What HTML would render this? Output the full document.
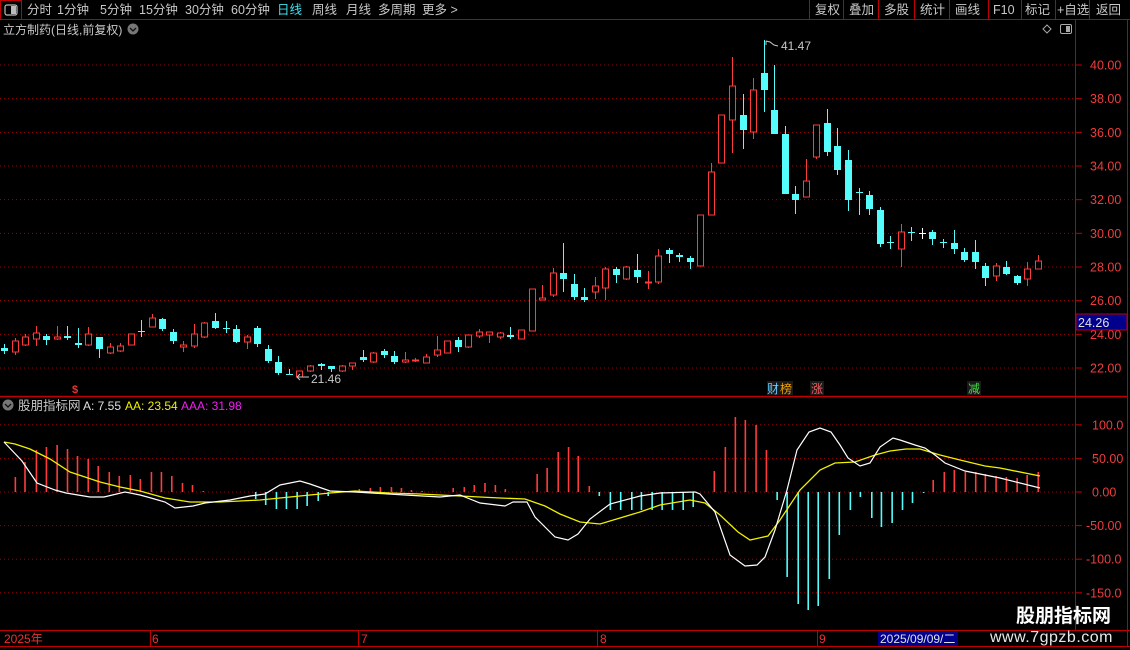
<!DOCTYPE html>
<html><head><meta charset="utf-8">
<style>
html,body{margin:0;padding:0;background:#000;}
body{width:1130px;height:650px;overflow:hidden;position:relative;font-family:"Liberation Sans","Noto Sans CJK SC",sans-serif;}
svg{position:absolute;left:0;top:0;}
</style></head><body>
<svg id="s" width="1130" height="650" xmlns="http://www.w3.org/2000/svg" font-family="Liberation Sans, Noto Sans CJK SC, sans-serif">
<rect width="1130" height="650" fill="#000"/>
<line x1="0" y1="19.5" x2="1130" y2="19.5" stroke="#c00000"/>
<rect x="0.5" y="0.5" width="21" height="19" fill="none" stroke="#c00000"/>
<rect x="5" y="5" width="12" height="10" rx="2" fill="none" stroke="#bbb" stroke-width="1.2"/>
<rect x="11" y="6" width="5" height="8" fill="#bbb"/>
<g font-size="12.5" fill="#c8c8c8">
<text x="27" y="14">分时</text><text x="57" y="14">1分钟</text><text x="100" y="14">5分钟</text><text x="139" y="14">15分钟</text><text x="185" y="14">30分钟</text><text x="231" y="14">60分钟</text>
<text x="277" y="14" fill="#40e0f0">日线</text><text x="312" y="14">周线</text><text x="346" y="14">月线</text><text x="378" y="14">多周期</text><text x="422" y="14">更多 &gt;</text>
</g>
<g stroke="#c00000"><line x1="809.5" y1="0" x2="809.5" y2="19"/><line x1="843.5" y1="0" x2="843.5" y2="19"/><line x1="878.5" y1="0" x2="878.5" y2="19"/><line x1="914.5" y1="0" x2="914.5" y2="19"/><line x1="949.5" y1="0" x2="949.5" y2="19"/><line x1="988.5" y1="0" x2="988.5" y2="19"/><line x1="1021.5" y1="0" x2="1021.5" y2="19"/><line x1="1055.5" y1="0" x2="1055.5" y2="19"/><line x1="1089.5" y1="0" x2="1089.5" y2="19"/></g>
<g font-size="12.5" fill="#c8c8c8"><text x="815" y="14">复权</text><text x="849" y="14">叠加</text><text x="884" y="14">多股</text><text x="920" y="14">统计</text><text x="955" y="14">画线</text><text x="993" y="14">F10</text><text x="1025" y="14">标记</text><text x="1057" y="14">+自选</text><text x="1096" y="14">返回</text></g>
<text x="3" y="34" font-size="12" fill="#c8c8c8">立方制药(日线,前复权)</text>
<circle cx="133" cy="29" r="5.5" fill="#777"/><path d="M130 28 L133 31 L136 28" stroke="#111" stroke-width="1.3" fill="none"/>
<path d="M1047 25 L1051 29 L1047 33 L1043 29Z" fill="none" stroke="#aaa"/>
<rect x="1060.5" y="24.5" width="11" height="9" rx="1.5" fill="none" stroke="#aaa"/><rect x="1066" y="26" width="4" height="6" fill="#aaa"/>
<line x1="1075.5" y1="19" x2="1075.5" y2="630" stroke="#c00000"/>
<line x1="0" y1="396.5" x2="1127" y2="396.5" stroke="#c00000" stroke-width="1.5"/>
<line x1="1127.5" y1="20" x2="1127.5" y2="646" stroke="#c00000"/>
<g id="grid"></g>
<g id="cand"></g>
<g id="ind"></g>
<text x="311" y="383" font-size="12" fill="#c8c8c8">21.46</text>
<path d="M297 377 L309 377 M297 377 L300 374 M297 377 L300 380" stroke="#c8c8c8" fill="none"/>
<text x="781" y="50" font-size="12" fill="#c8c8c8">41.47</text>
<path d="M766 41 L766 45 M766 41 L770 42 L774 45 L778 46" stroke="#c8c8c8" fill="none"/>
<rect x="1076" y="314" width="51" height="16" fill="#00008c" stroke="#c00000"/>
<text x="1078" y="327" font-size="12.5" fill="#e0e0e0">24.26</text>
<text x="72" y="393" font-size="11" fill="#f03030" font-weight="bold">$</text>
<rect x="767" y="381" width="26" height="14" fill="#1a1a1a"/><text x="767" y="393" font-size="12" fill="#6cf">财</text><text x="780" y="393" font-size="12" fill="#f0a000">榜</text>
<rect x="810" y="381" width="14" height="14" fill="#1a1a1a"/><text x="811" y="393" font-size="12" fill="#f06060">涨</text>
<rect x="967" y="381" width="14" height="14" fill="#1a1a1a"/><text x="968" y="393" font-size="12" fill="#40e040">减</text>
<circle cx="8" cy="405" r="5.5" fill="#777"/><path d="M5 404 L8 407 L11 404" stroke="#111" stroke-width="1.3" fill="none"/>
<text x="18" y="410" font-size="12.5" fill="#c8c8c8">股朋指标网</text>
<text x="83" y="410" font-size="12" fill="#e0e0e0">A: 7.55</text>
<text x="125" y="410" font-size="12" fill="#f0f000">AA: 23.54</text>
<text x="181" y="410" font-size="12" fill="#f020f0">AAA: 31.98</text>
<line x1="0" y1="630.5" x2="1130" y2="630.5" stroke="#c00000"/>
<line x1="0" y1="646.5" x2="1130" y2="646.5" stroke="#c00000"/>
<g stroke="#c00000"><line x1="150.5" y1="630" x2="150.5" y2="646"/><line x1="358.5" y1="630" x2="358.5" y2="646"/><line x1="597.5" y1="630" x2="597.5" y2="646"/><line x1="817.5" y1="630" x2="817.5" y2="646"/></g>
<g font-size="12" fill="#f03030"><text x="4" y="643">2025年</text><text x="152" y="643">6</text><text x="361" y="643">7</text><text x="600" y="643">8</text><text x="819" y="643">9</text></g>
<rect x="878" y="631" width="80" height="15" fill="#00008c"/>
<text x="880" y="643" font-size="12" fill="#e0e0e0">2025/09/09/二</text>
<text x="1016" y="622" font-size="19" font-weight="bold" fill="#fff">股朋指标网</text>
<text x="990" y="642" font-size="16" fill="#e8e8e8" letter-spacing="0.5">www.7gpzb.com</text>
</svg>
<script>
var NS="http://www.w3.org/2000/svg";
function el(p,t,a){var e=document.createElementNS(NS,t);for(var k in a)e.setAttribute(k,a[k]);p.appendChild(e);return e;}
var g=document.getElementById('grid');
for(var i=0;i<10;i++){var p=40-2*i,y=65+(40-p)*16.833;
 el(g,'line',{x1:0,y1:y,x2:1073,y2:y,stroke:'#a00000','stroke-dasharray':'1,3'});
 el(g,'line',{x1:1076,y1:y,x2:1082,y2:y,stroke:'#c00000'});
 var t=el(g,'text',{x:1090,y:y+4.5,'font-size':12.5,fill:'#f03c3c'});t.textContent=p.toFixed(2);}
var il=[[100,'100.0'],[50,'50.00'],[0,'0.00'],[-50,'-50.00'],[-100,'-100.0'],[-150,'-150.0']];
il.forEach(function(v){var y=492-v[0]*0.672;
 el(g,'line',{x1:0,y1:y,x2:1073,y2:y,stroke:'#a00000','stroke-dasharray':'1,3'});
 el(g,'line',{x1:1076,y1:y,x2:1082,y2:y,stroke:'#c00000'});
 var t=el(g,'text',{x:v[1].length>5?1086:1092,y:y+4.5,'font-size':12.5,fill:'#f03c3c'});t.textContent=v[1];});
var C=[
['c',348,351,344,354],['r',341,352,338,355],['r',337,345,334,346],['r',333,339,326,346],['c',336,340,334,345],['r',337,339,326,340],['c',336,338,326,340],['c',343,345,328,348],['r',334,345,327,346],['c',337,349,337,358],
['r',347,353,343,354],['r',346,351,343,352],['r',334,345,334,345],['c',331,332,320,337],['r',318,327,314,327],['c',319,329,318,331],['c',332,341,329,344],['r',345,347,341,352],['r',334,346,324,348],['r',323,337,322,338],
['c',321,328,313,329],['c',328,328,321,333],['c',329,342,325,343],['r',337,342,335,349],['c',328,344,326,347],['c',349,361,345,363],['c',362,373,356,375],['c',374,374,369,375],['r',371,377,371,377],['r',366,371,365,372],
['c',364,366,363,370],['c',366,369,366,372],['r',366,371,365,372],['r',363,366,363,370],['c',357,360,350,362],['r',353,362,352,363],['c',351,355,349,358],['c',356,362,351,364],['r',360,362,352,363],['r',360,360,358,362],
['r',357,363,354,363],['r',350,355,336,357],['r',341,353,341,353],['c',340,347,337,352],['r',335,347,335,348],['r',332,336,329,338],['r',332,335,332,343],['r',333,337,332,339],['c',335,337,327,339],['r',330,339,330,339],
['r',289,331,289,331],
['r',298,300,285,300],['r',273,295,268,297],['c',273,279,243,292],['c',284,297,274,300],['c',297,300,288,302],['r',286,292,277,299],['r',269,288,267,300],['c',269,275,267,283],['r',267,279,266,280],['c',270,277,254,283],
['r',282,283,271,289],['r',256,282,249,284],['c',250,254,248,263],['c',255,257,253,262],['c',258,262,256,269],['r',215,266,215,266],['r',172,215,163,215],['r',115,163,115,163],['r',86,120,57,153],['c',115,130,94,149],
['r',90,132,78,139],['c',73,90,40,112],['c',110,134,65,134],['c',134,194,126,194],['c',194,200,186,214],['r',181,197,159,197],['r',125,157,125,159],['c',123,152,109,156],['c',146,170,128,175],['c',160,200,150,211],
['c',192,193,188,215],['c',195,209,191,215],['c',210,244,207,247],['c',242,243,236,249],['r',232,249,224,267],['c',232,233,227,241],['w',233,234,228,239],['c',232,239,230,245],['c',242,243,239,248],['c',243,249,230,254],
['c',252,260,248,262],['c',252,262,240,269],['c',266,278,263,286],['r',266,276,263,281],['c',267,274,261,275],['c',276,283,275,285],['r',269,279,262,286],['r',261,269,255,269]];
var cg=document.getElementById('cand');
C.forEach(function(c,i){var x=Math.round(4+i*10.55)+0.5,col=c[0]=='r'?'#ff3c3c':(c[0]=='w'?'#ffffff':'#54fcfc');
 el(cg,'line',{x1:x,y1:c[3],x2:x,y2:c[4],stroke:col});
 var h=Math.max(c[2]-c[1],1);
 if(c[0]=='r') el(cg,'rect',{x:x-3,y:c[1],width:6,height:h,fill:'#000',stroke:col});
 else el(cg,'rect',{x:x-3.5,y:c[1],width:7,height:h,fill:col});
});
var ig=document.getElementById('ind');
function bar(x,y,col){el(ig,'line',{x1:x,y1:492,x2:x,y2:y,stroke:col,'stroke-width':1.6});}
var R7=[[43,477],[70,462],[102,450],[130,447],[160,445],[189,449],[217,456],[247,459],[275,466],[306,472],[334,476],[365,475],[393,479],[424,472],[452,472],[481,476],[511,483],[539,485],[569,491],[1006,489],[1037,488],[1065,487],[1096,487],[1124,488],[1152,490],[1182,491],[1269,488],[1300,487],[1328,485],[1358,483],[1387,485],[1415,489]];
R7.forEach(function(b){bar(b[0]/2.8,b[1],'#ff3c3c');});
var C7=[[716,499],[744,505],[774,509],[802,509],[832,509],[860,506],[891,501],[919,496]];
C7.forEach(function(b){bar(b[0]/2.8,b[1],'#54fcfc');});
var R8=[[48,474],[76,468],[107,452],[136,447],[163,456],[194,486],[544,471],[575,447],[603,417],[631,420],[661,425],[690,450],[1157,480],[1188,472],[1216,470],[1247,472],[1276,472],[1303,474],[1333,476],[1362,477],[1392,478],[1420,475],[1451,472]];
R8.forEach(function(b){bar(520+b[0]/2.8,b[1],'#ff3c3c');});
var C8=[[222,496],[253,510],[282,510],[313,510],[340,510],[370,510],[398,510],[427,510],[457,510],[485,507],[720,500],[748,577],[779,604],[807,610],[835,606],[866,579],[894,535],[925,510],[953,497],[985,518],[1012,527],[1042,523],[1071,510],[1099,503],[1130,493]];
C8.forEach(function(b){bar(520+b[0]/2.8,b[1],'#54fcfc');});
var W=[[4,442],[22,461],[37,483],[55,490],[66,493],[90,497],[104,497],[125,492],[140,495],[151,498],[165,502],[175,508],[193,506],[205,503],[230,500],[250,496],[265,494],[280,485],[300,481],[310,484],[330,491],[355,492],[405,495],[440,497],[460,495],[480,503],[505,506],[513,502],[527,502],[535,517],[555,537],[568,540],[578,534],[590,519],[610,504],[640,496],[660,493],[695,492],[700,494],[715,512],[730,555],[745,566],[757,565],[765,557],[775,530],[787,490],[797,450],[809,432],[820,428],[831,432],[840,445],[848,458],[860,466],[870,463],[880,447],[893,438],[900,440],[915,445],[925,448],[935,455],[945,463],[965,471],[1000,478],[1040,488]];
var Y=[[4,442],[15,444],[30,449],[50,459],[70,472],[85,477],[100,482],[120,487],[140,491],[165,498],[190,502],[220,502],[260,500],[300,496],[330,493],[355,491],[390,493],[420,494],[460,496],[500,498],[525,499],[545,506],[560,514],[580,522],[600,524],[620,518],[640,512],[660,505],[690,500],[705,503],[720,515],[738,532],[750,540],[768,536],[780,520],[800,490],[820,470],[835,463],[855,462],[875,455],[890,451],[906,449],[920,449],[940,455],[960,460],[985,466],[1000,468],[1040,476]];
el(ig,'polyline',{points:Y.map(function(p){return p.join(',')}).join(' '),fill:'none',stroke:'#f0f000','stroke-width':1.3});
el(ig,'polyline',{points:W.map(function(p){return p.join(',')}).join(' '),fill:'none',stroke:'#ffffff','stroke-width':1.2});
</script>
</body></html>
